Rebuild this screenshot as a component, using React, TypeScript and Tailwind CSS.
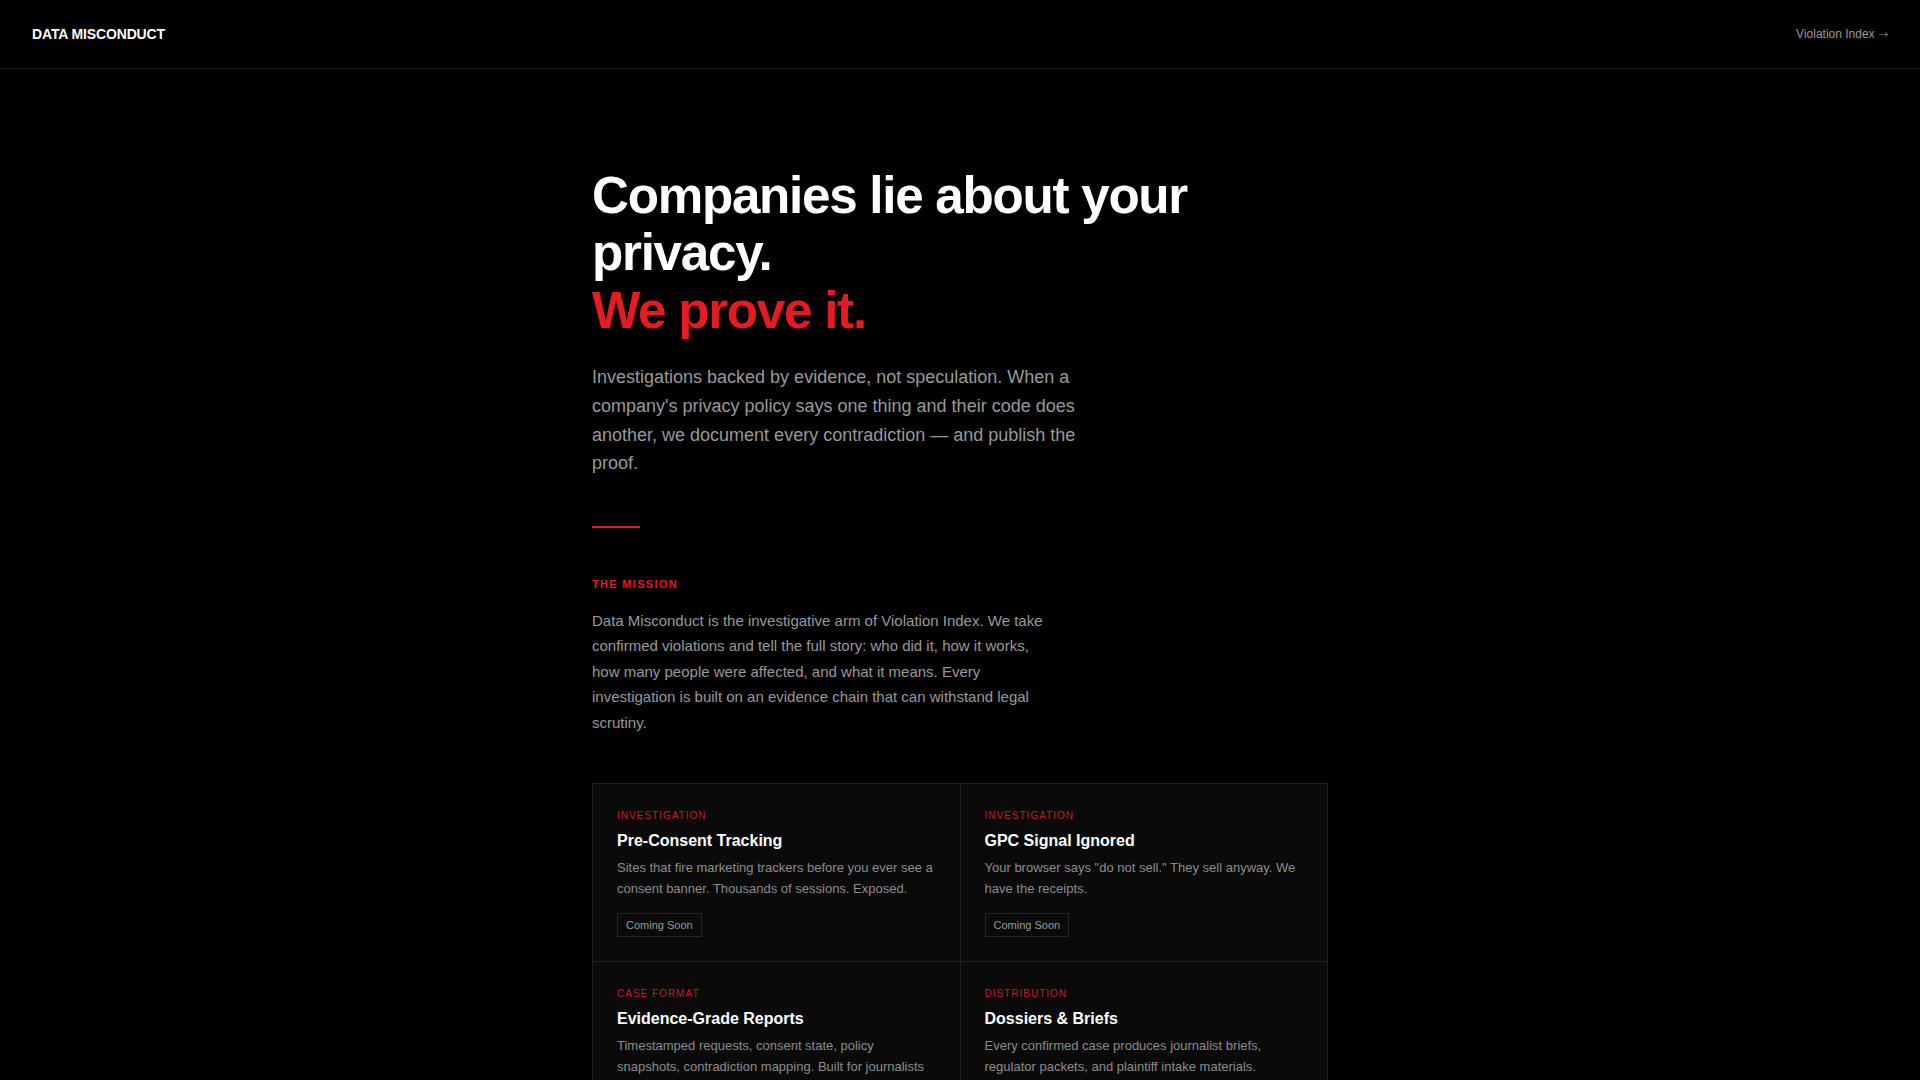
const cards = [
  {
    label: "Investigation",
    title: "Pre-Consent Tracking",
    body: "Sites that fire marketing trackers before you ever see a consent banner. Thousands of sessions. Exposed.",
    badge: "Coming Soon",
  },
  {
    label: "Investigation",
    title: "GPC Signal Ignored",
    body: 'Your browser says "do not sell." They sell anyway. We have the receipts.',
    badge: "Coming Soon",
  },
  {
    label: "Case Format",
    title: "Evidence-Grade Reports",
    body: "Timestamped requests, consent state, policy snapshots, contradiction mapping. Built for journalists and legal teams.",
  },
  {
    label: "Distribution",
    title: "Dossiers & Briefs",
    body: "Every confirmed case produces journalist briefs, regulator packets, and plaintiff intake materials.",
  },
];

export default function App() {
  return (
    <div className="min-h-screen bg-black text-white font-['Liberation_Sans',Arial,sans-serif]">
      {/* Header */}
      <header className="flex items-center justify-between border-b border-[#1c1c1c] px-8 py-6">
        <a href="#" className="text-sm font-bold leading-5 tracking-[-0.01em] text-white">
          DATA MISCONDUCT
        </a>
        <a href="#" className="text-xs leading-5 text-[#999]">
          Violation Index <span className="font-['DejaVu_Sans',sans-serif] font-light">→</span>
        </a>
      </header>

      <main className="mx-auto max-w-3xl px-4 pt-[98px] pb-24">
        {/* Hero */}
        <h1 className="text-[3.2rem] font-bold leading-[1.12] tracking-[-0.025em] text-white">
          Companies lie about your privacy.
          <br />
          <span className="text-[#e31b23]">We prove it.</span>
        </h1>
        <p className="mt-6 max-w-lg text-lg leading-[1.6] text-[#999]">
          Investigations backed by evidence, not speculation. When a company's privacy policy says one
          thing and their code does another, we document every contradiction — and publish the proof.
        </p>

        <div className="mt-12 h-0.5 w-12 bg-[#e31b23]" />

        {/* Mission */}
        <h2 className="mt-12 text-[11px] font-bold uppercase leading-[1.5] tracking-[0.12em] text-[#e31b23]">
          The Mission
        </h2>
        <p className="mt-[15px] max-w-[460px] text-[15px] leading-[1.7] text-[#999]">
          Data Misconduct is the investigative arm of Violation Index. We take confirmed violations and
          tell the full story: who did it, how it works, how many people were affected, and what it
          means. Every investigation is built on an evidence chain that can withstand legal scrutiny.
        </p>

        {/* Cards */}
        <div className="mt-12 grid grid-cols-2 gap-px border border-[#1f1f1f] bg-[#1f1f1f]">
          {cards.map((card) => (
            <div key={card.title} className="bg-[#0a0a0a] p-6">
              <div className="text-[10px] uppercase leading-[1.5] tracking-[0.1em] text-[#c41e1e]">
                {card.label}
              </div>
              <h3 className="mt-2 text-base font-bold leading-5 text-white">{card.title}</h3>
              <p className="mt-[7px] text-[13px] leading-[1.6] text-[#8c8c8c]">{card.body}</p>
              {card.badge && (
                <span className="mt-[13px] inline-block border border-[#262626] px-2 py-[3px] text-[11px] leading-4 text-[#999]">
                  {card.badge}
                </span>
              )}
            </div>
          ))}
        </div>
      </main>
    </div>
  );
}
